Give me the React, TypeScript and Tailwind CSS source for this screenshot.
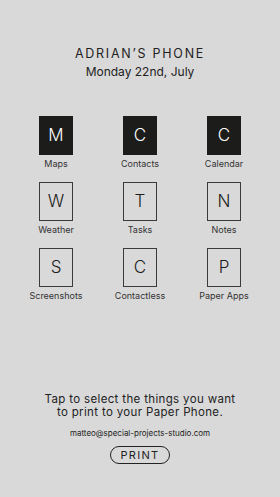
const apps = [
  { letter: "M", label: "Maps", on: true },
  { letter: "C", label: "Contacts", on: true },
  { letter: "C", label: "Calendar", on: true },
  { letter: "W", label: "Weather", on: false },
  { letter: "T", label: "Tasks", on: false },
  { letter: "N", label: "Notes", on: false },
  { letter: "S", label: "Screenshots", on: false },
  { letter: "C", label: "Contactless", on: false },
  { letter: "P", label: "Paper Apps", on: false },
];

export default function App() {
  return (
    <div
      className="flex h-[497px] w-[280px] flex-col items-center bg-[#d9d9d9] text-[#222]"
      style={{ fontFamily: "Inter, 'Noto Sans', sans-serif" }}
    >
      <div className="pt-[46px] text-center">
        <div className="text-[12.5px] leading-[16px] tracking-[0.14em] text-[#222]">ADRIAN’S PHONE</div>
        <div className="mt-[2px] text-[12px] leading-[16px]">Monday 22nd, July</div>
      </div>

      <div className="mt-[36px] grid w-[252px] grid-cols-3 gap-y-[12px]">
        {apps.map((a, i) => (
          <div key={i} className="flex flex-col items-center">
            <div
              className={
                a.on
                  ? "flex h-[39px] w-[34px] items-center justify-center bg-[#1c1c1a] text-[17px] font-light text-white"
                  : "flex h-[39px] w-[34px] items-center justify-center border-[1.5px] border-[#3a3a3a] text-[17px] font-light text-[#1c1c1a]"
              }
            >
              {a.letter}
            </div>
            <div className="mt-[3px] text-[9px] leading-[12px] text-[#333]">{a.label}</div>
          </div>
        ))}
      </div>

      <div className="flex-1" />

      <div className="pb-[33px] flex flex-col items-center text-center">
        <div className="text-[11.5px] leading-[13px] tracking-[0.03em]">
          Tap to select the things you want
          <br />
          to print to your Paper Phone.
        </div>
        <div className="mt-[9px] text-[8px] leading-[10px]">matteo@special-projects-studio.com</div>
        <button className="mt-[8px] rounded-full border-[1.5px] border-[#222] px-[9px] py-[1px] text-[11px] leading-[14px] tracking-[0.12em]">
          PRINT
        </button>
      </div>
    </div>
  );
}
